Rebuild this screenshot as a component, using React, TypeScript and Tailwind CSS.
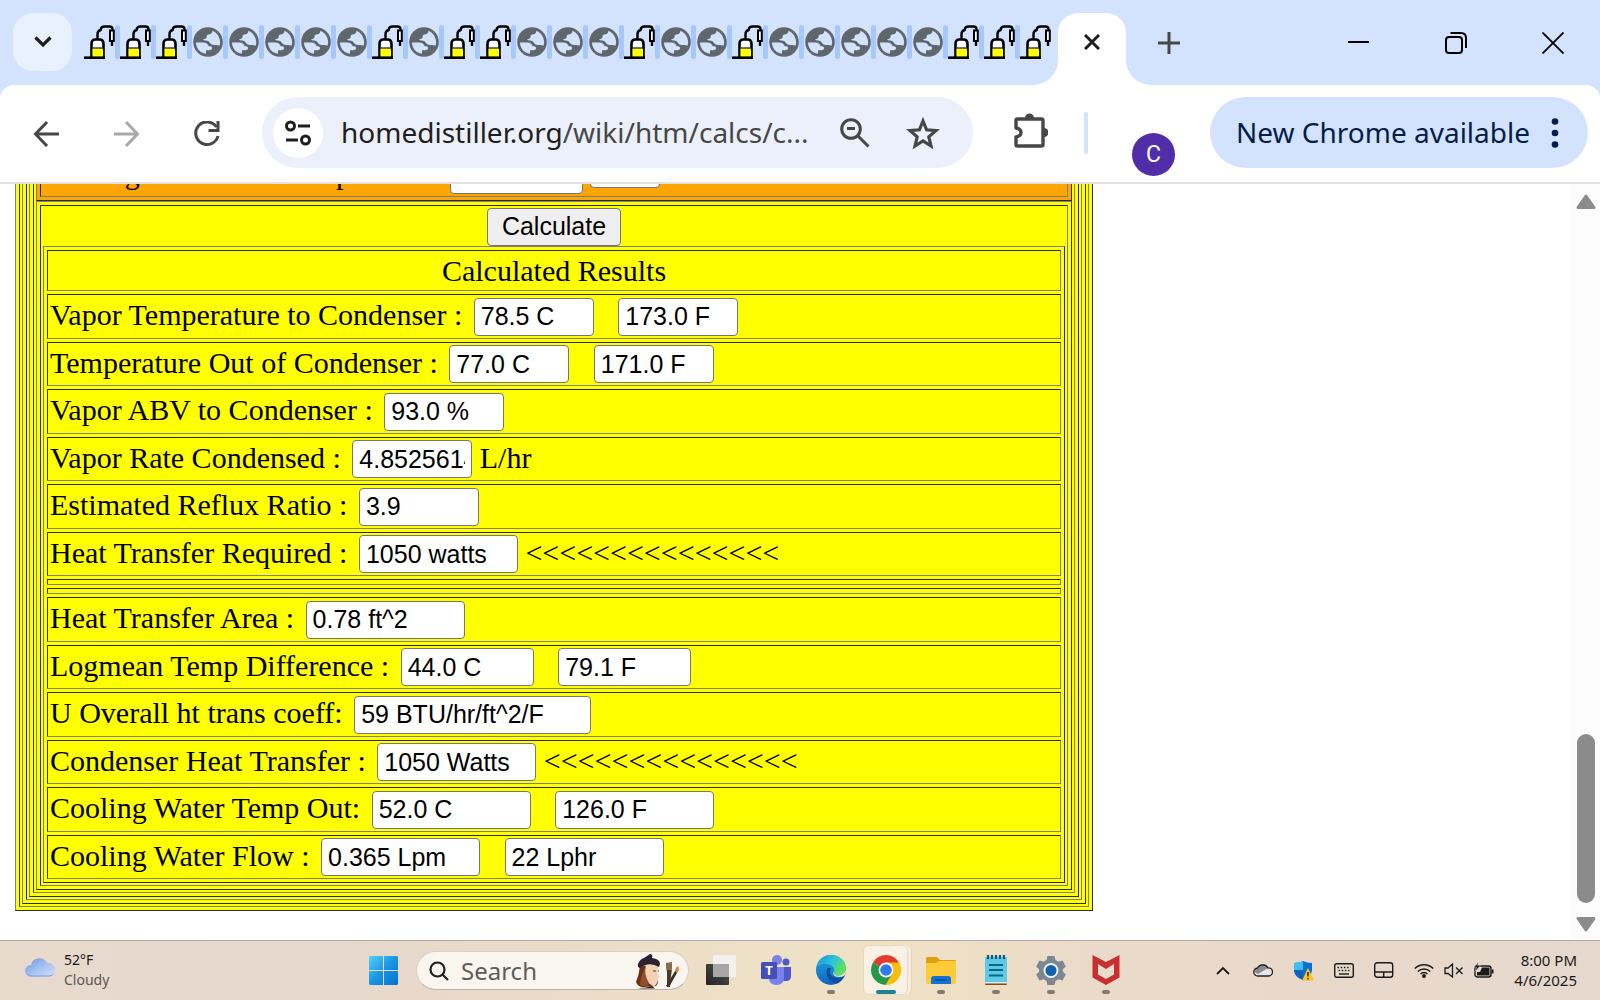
import React from "react";

const UI = "font-['Noto_Sans','Open_Sans',sans-serif]";

/* ---------- tab strip ---------- */

function StillIcon() {
  return (
    <svg className="h-[34px] w-[31px] shrink-0" viewBox="0 0 31 34" fill="none">
      <path d="M7.500 32V19q0-4.500 4-4.500h4q4 0 4 4.500v13z" fill="#fff" stroke="#000" strokeWidth="2.600" />
      <path d="M8.500 23.500h10.500V32H8.500z" fill="#ff0" />
      <path d="M8 23h11" stroke="#333" strokeWidth="1.400" />
      <path d="M0 32.700h21" stroke="#000" strokeWidth="2.600" />
      <path d="M13.500 14.500V9q0-3 3-4 .5-3.500 4-3.500h5q3 0 3 3v1" stroke="#000" strokeWidth="2.400" />
      <path d="M26 5.500h3.800v10.500H26z" fill="#fff" stroke="#000" strokeWidth="2" />
      <path d="M28 16v5" stroke="#000" strokeWidth="2.400" />
    </svg>
  );
}

function GlobeIcon() {
  return (
    <svg className="h-[30px] w-[31px] shrink-0" viewBox="-1 0 31 30">
      <circle cx="15" cy="15" r="14.800" fill="#5f666c" />
      <path
        d="M3 15.500h7.500q4 0 5 3.500 3.500 0 3.500 2 0 2.200-3 2.200h-3v3.500q-6.500-1-8.700-6Q3 18.500 3 15.500z"
        fill="#d3e3fd"
      />
      <path
        d="M19.500 3.800Q19 7 16.500 7.300q-3 .2-3 2.700 0 2-3.500 2.200.5 1.500 3.500 1.300 2.500 0 3.500 2.500 1.500 2.500 5 2 3-.3 4.500.8 1.500-3.300 0-7.300Q24.500 6 19.500 3.800z"
        fill="#d3e3fd"
      />
    </svg>
  );
}

const TABS = "SSSGGGGGSGSSGGGSGGSGGGGGSSS".split("");

function TabStrip() {
  return (
    <header className="flex h-[85px] shrink-0 items-start bg-[#d3e3fd]">
      <button aria-label="Search tabs" className="mt-[13px] ml-[13px] flex h-[58px] w-[59px] shrink-0 items-center justify-center rounded-[20px] bg-[#e9f1fe]">
        <svg className="h-3 w-[18px]" viewBox="0 0 18 12" fill="none" stroke="#1f1f1f" strokeWidth="3.200">
          <path d="M1.500 1.500L9 9l7.500-7.500" />
        </svg>
      </button>
      <div className="mt-[25px] ml-3 flex shrink-0" role="tablist">
        {TABS.map((t, i) => (
          <button key={i} role="tab" aria-label={"Tab " + (i + 1)} className="flex h-[34px] w-9 items-center">
            {t === "S" ? <StillIcon /> : <GlobeIcon />}
            {i < TABS.length - 1 && <span className="h-[34px] w-[5px] rounded-full bg-[#a8c7fa]" />}
          </button>
        ))}
      </div>
      <div className="-ml-[23px] flex shrink-0 self-end">
        <span className="h-[25px] w-[25px] self-end overflow-hidden bg-white">
          <span className="block h-full w-full rounded-br-[25px] bg-[#d3e3fd]" />
        </span>
        <div className="flex h-[72px] w-[68px] justify-center rounded-t-[20px] bg-white">
          <button aria-label="Close tab" className="mt-[21px] h-4 w-4">
            <svg viewBox="0 0 16 16" className="h-4 w-4" stroke="#1f1f1f" strokeWidth="3">
              <path d="M1 1l14 14M15 1L1 15" />
            </svg>
          </button>
        </div>
        <span className="h-[25px] w-[25px] self-end overflow-hidden bg-white">
          <span className="block h-full w-full rounded-bl-[25px] bg-[#d3e3fd]" />
        </span>
      </div>
      <button aria-label="New tab" className="mt-8 ml-[7px]">
        <svg viewBox="0 0 22 22" className="h-[22px] w-[22px]" stroke="#474747" strokeWidth="3">
          <path d="M11 0v22M0 11h22" />
        </svg>
      </button>
      <div className="mt-8 mr-9 ml-auto flex gap-[75px]">
        <button aria-label="Minimize">
          <svg viewBox="0 0 22 22" className="h-[22px] w-[22px]" stroke="#000" strokeWidth="2">
            <path d="M0 10h21" />
          </svg>
        </button>
        <button aria-label="Restore">
          <svg viewBox="0 0 22 22" className="h-[22px] w-[22px]" stroke="#000" strokeWidth="2" fill="none">
            <rect x="1" y="5" width="16" height="16" rx="3" />
            <path d="M5.500 1H16q5 0 5 5v10" />
          </svg>
        </button>
        <button aria-label="Close">
          <svg viewBox="0 0 22 22" className="h-[22px] w-[22px]" stroke="#000" strokeWidth="1.800">
            <path d="M.5.5l21 21M21.500.5l-21 21" />
          </svg>
        </button>
      </div>
    </header>
  );
}

/* ---------- address bar ---------- */

function Toolbar() {
  return (
    <div className="shrink-0 bg-[#d3e3fd]">
      <div className={"flex h-[99px] items-start rounded-t-[14px] border-b-2 border-[#e1e1e1] bg-white pt-3 " + UI}>
        <button aria-label="Back" className="mt-6 ml-[33px]">
          <svg viewBox="0 0 26 26" className="h-[26px] w-[26px]" fill="none" stroke="#474747" strokeWidth="3">
            <path d="M26 13H3M14 1L2.500 13 14 25" />
          </svg>
        </button>
        <button aria-label="Forward" className="mt-6 ml-[55px]">
          <svg viewBox="0 0 26 26" className="h-[26px] w-[26px]" fill="none" stroke="#a9a9a9" strokeWidth="3">
            <path d="M0 13h23M12 1l11.500 12L12 25" />
          </svg>
        </button>
        <button aria-label="Reload" className="mt-6 ml-[54px]">
          <svg viewBox="0 0 26 26" className="h-[26px] w-[26px]" fill="none" stroke="#474747" strokeWidth="3">
            <path d="M22.500 6A11.300 11.300 0 1 0 24 15" />
            <path d="M24 0v9.500h-9.500" />
          </svg>
        </button>
        <div className="ml-[42px] flex h-[71px] w-[711px] items-center rounded-full bg-[#ebf0fa]">
          <button aria-label="Site information" className="ml-[11px] flex h-[50px] w-[50px] shrink-0 items-center justify-center rounded-full bg-white">
            <svg viewBox="0 0 26 26" className="h-[26px] w-[26px]" fill="none" stroke="#1f1f1f" strokeWidth="3">
              <circle cx="5.500" cy="6" r="4" />
              <path d="M13 6h12M1 20h12" />
              <circle cx="20.500" cy="20" r="4" />
            </svg>
          </button>
          <a href="#address" className="ml-[18px] w-[475px] pb-[2px] text-[28px] leading-[40px] whitespace-nowrap text-[#474747]">
            <span className="text-[#1f1f1f]">homedistiller.org</span>/wiki/htm/calcs/c...
          </a>
          <button aria-label="Zoom" className="ml-6">
            <svg viewBox="0 0 30 30" className="h-[30px] w-[30px]" fill="none" stroke="#474747" strokeWidth="3">
              <circle cx="11" cy="11" r="9.300" />
              <path d="M18 18l10.500 10.500M7 10.500h8" />
            </svg>
          </button>
          <button aria-label="Bookmark this page" className="ml-9">
            <svg viewBox="0 0 34 32" className="h-8 w-[34px]" fill="none" stroke="#474747" strokeWidth="3.200">
              <path d="M17 4l3.600 8.800 9.400.8-7.200 6.200 2.200 9.200L17 24l-8 5 2.200-9.200L4 13.600l9.400-.8z" />
            </svg>
          </button>
        </div>
        <button aria-label="Extensions" className="mt-4 ml-[41px]">
          <svg viewBox="0 0 34 36" className="h-9 w-[34px]">
            <path
              d="M3.500 6h24q1.500 0 1.500 1.500v24q0 1.500-1.500 1.500h-24Q2 33 2 31.500V24q5-1 5-4.500T2 15V7.500Q2 6 3.500 6z"
              fill="none"
              stroke="#474747"
              strokeWidth="3.400"
              strokeLinejoin="round"
            />
            <path d="M11 5a4.500 4.500 0 0 1 9 0zM30 15a4.500 4.500 0 0 1 0 9z" fill="#474747" />
          </svg>
        </button>
        <span className="mt-[15px] ml-9 h-[42px] w-1 rounded-full bg-[#d3e3fd]" />
        <button aria-label="Profile" className="mt-9 ml-11 flex h-[43px] w-[43px] items-center justify-center rounded-full bg-[#512da8] pt-[2px] font-[Roboto,sans-serif] text-[23px] text-white">
          C
        </button>
        <button className="mr-3 ml-auto flex h-[71px] w-[378px] items-center justify-between rounded-full bg-[#d3e3fd] pr-[29px] pl-[26px] text-[28px] whitespace-nowrap text-[#041e49]">
          <span className="pb-[2px]">New Chrome available</span>
          <svg viewBox="0 0 8 30" className="h-[30px] w-2" fill="#041e49">
            <circle cx="4" cy="3.500" r="3.300" />
            <circle cx="4" cy="15" r="3.300" />
            <circle cx="4" cy="26.500" r="3.300" />
          </svg>
        </button>
      </div>
    </div>
  );
}

/* ---------- calculator page ---------- */

const OUTSET = "border border-t-[#808080] border-l-[#808080] border-r-[#2c2c2c] border-b-[#2c2c2c]";
const INSET = "border border-t-[#2c2c2c] border-l-[#2c2c2c] border-r-[#808080] border-b-[#808080]";

function Frame({ children }: { children: React.ReactNode }) {
  return (
    <div className={"p-[3px] " + OUTSET}>
      <div className={"p-[2px] " + INSET}>{children}</div>
    </div>
  );
}

type Field = { value: string; width: string };
type Row = { label: string; fields: Field[]; after?: string };

const S = "w-[120px]";
const M = "w-[133px]";
const L = "w-[159px]";
const XL = "w-[237px]";
const MARKS = "<<<<<<<<<<<<<<<";

const VAPOR: Row[] = [
  { label: "Vapor Temperature to Condenser :", fields: [{ value: "78.5 C", width: S }, { value: "173.0 F", width: S }] },
  { label: "Temperature Out of Condenser :", fields: [{ value: "77.0 C", width: S }, { value: "171.0 F", width: S }] },
  { label: "Vapor ABV to Condenser :", fields: [{ value: "93.0 %", width: S }] },
  { label: "Vapor Rate Condensed :", fields: [{ value: "4.8525614", width: S }], after: "L/hr" },
  { label: "Estimated Reflux Ratio :", fields: [{ value: "3.9", width: S }] },
  { label: "Heat Transfer Required :", fields: [{ value: "1050 watts", width: L }], after: MARKS },
];

const TRANSFER: Row[] = [
  { label: "Heat Transfer Area :", fields: [{ value: "0.78 ft^2", width: L }] },
  { label: "Logmean Temp Difference :", fields: [{ value: "44.0 C", width: M }, { value: "79.1 F", width: M }] },
  { label: "U Overall ht trans coeff:", fields: [{ value: "59 BTU/hr/ft^2/F", width: XL }] },
  { label: "Condenser Heat Transfer :", fields: [{ value: "1050 Watts", width: L }], after: MARKS },
  { label: "Cooling Water Temp Out:", fields: [{ value: "52.0 C", width: L }, { value: "126.0 F", width: L }] },
  { label: "Cooling Water Flow :", fields: [{ value: "0.365 Lpm", width: L }, { value: "22 Lphr", width: L }] },
];

const INPUT =
  "h-[38px] rounded-[4px] border border-[#767676] bg-white px-[6px] font-['Liberation_Sans',sans-serif] text-[25px] ";

function ResultRow({ row, id }: { row: Row; id: string }) {
  return (
    <tr className="[&>td]:h-[44px] even:[&>td]:h-[45px]">
      <td className={"px-[2px] py-0 align-middle leading-[34px] whitespace-pre " + INSET}>
        <label htmlFor={id} className="pr-1">{row.label}</label>{" "}
        {row.fields.map((f, i) => (
          <React.Fragment key={i}>
            {i > 0 && <span className="pr-[2px]">{"\u00a0\u00a0 "}</span>}
            <input id={i === 0 ? id : undefined} aria-label={row.label} defaultValue={f.value} className={INPUT + f.width} />
          </React.Fragment>
        ))}
        {row.after && " " + row.after}
      </td>
    </tr>
  );
}

function Spacer() {
  return (
    <tr>
      <td className={"h-[6px] p-0 " + INSET} />
    </tr>
  );
}

function Calculator() {
  return (
    <div className="w-[70%] bg-[#ff0] font-['Liberation_Serif',serif] text-[30px] text-black">
      <Frame>
        <Frame>
          <Frame>
            <div className="bg-[#ffa500]">
              <Frame>
                <div className="leading-[34px] whitespace-pre">
                  <label htmlFor="inlet" className="pr-2">Cooling water Inlet Temperature</label>{" "}
                  <input id="inlet" className={INPUT + M} />{" "}
                  <select aria-label="Temperature unit" className="h-[29px] w-[70px] appearance-none rounded-[4px] border border-[#767676] bg-white align-baseline text-[20px]">
                    <option> </option>
                  </select>
                </div>
              </Frame>
            </div>
            <Frame>
              <button className="mx-auto flex h-[38px] w-[134px] items-center justify-center rounded-[4px] border border-[#767676] bg-[#efefef] font-['Liberation_Sans',sans-serif] text-[25px]">
                Calculate
              </button>
              <table className={"w-full border-separate border-spacing-[3px] " + OUTSET}>
                <tbody>
                  <tr>
                    <th className={"h-[41px] p-0 text-center leading-[36px] font-normal " + INSET}>Calculated Results</th>
                  </tr>
                  {VAPOR.map((r, i) => (
                    <ResultRow key={r.label} row={r} id={"vapor-" + i} />
                  ))}
                  <Spacer />
                  <Spacer />
                  {TRANSFER.map((r, i) => (
                    <ResultRow key={r.label} row={r} id={"transfer-" + i} />
                  ))}
                </tbody>
              </table>
            </Frame>
          </Frame>
        </Frame>
      </Frame>
    </div>
  );
}

function Page() {
  return (
    <main className="flex min-h-0 flex-1 bg-white">
      <div className="flex min-w-0 flex-1 flex-col justify-end overflow-hidden px-[15px] pb-[29px]">
        <Calculator />
      </div>
      <div className="flex w-[30px] shrink-0 flex-col items-center bg-[#fcfcfc] pt-[10px] pb-2 pl-[2px]">
        <svg viewBox="0 0 20 15" className="h-[15px] w-5" fill="#8b8b8b" stroke="#8b8b8b" strokeWidth="3" strokeLinejoin="round">
          <path d="M10 2l8 11.500H2z" />
        </svg>
        <div className="min-h-0 w-[18px] flex-1 pt-[525px]">
          <div className="h-[169px] rounded-full bg-[#8b8b8b]" />
        </div>
        <svg viewBox="0 0 20 15" className="h-[15px] w-5" fill="#8b8b8b" stroke="#8b8b8b" strokeWidth="3" strokeLinejoin="round">
          <path d="M10 13L2 1.500h16z" />
        </svg>
      </div>
    </main>
  );
}

/* ---------- taskbar ---------- */

function TaskApp({ label, running, children }: { label: string; running?: boolean; children: React.ReactNode }) {
  return (
    <button aria-label={label} className="flex h-[50px] w-[55px] flex-col items-center pt-2">
      <svg viewBox="0 0 32 32" className="h-8 w-8">
        {children}
      </svg>
      {running && <span className="mt-1 h-1 w-2 rounded-full bg-[#857b70]" />}
    </button>
  );
}

function Painter() {
  return (
    <svg viewBox="0 0 50 36" className="h-9 w-[50px]">
      <path d="M5 13Q4 22 1 29q2 6 9 5l11-1q3-3 1-6V12z" fill="#6b3219" />
      <path d="M11 12q7-3 12 0v9l1.500 4-2 1q0 6-4 7.500L12 29q-4-9-1-17z" fill="#f3d3b5" />
      <path d="M11 13q-2.500 8 3 17l-2 4-7-2q1-11 6-19z" fill="#95502b" />
      <path d="M3 11Q5 6 9 5l6-4q3 0 2 4 8 1 8 6l-1 3Q14 8 5 15q-3-1-2-4z" fill="#2e2230" />
      <path d="M2 35.500h18l-3-2.500-6 1.500z" fill="#3a2418" />
      <path d="M18 18h3M23 18h1" stroke="#5a3423" />
      <path d="M31 10l6-1v6l-1 8-3 1-2-9z" fill="#8b6b4d" />
      <path d="M32 17h4.500l-1.500 17h-3z" fill="#4a3b2c" />
      <path d="M43 13q2 4-1 7l-2-1q0-4 3-6z" fill="#dd7b3f" />
      <path d="M40 18l2 2-8 14-3-1z" fill="#3c342c" />
    </svg>
  );
}

function Taskbar() {
  return (
    <footer
      className={
        "flex h-[60px] shrink-0 border-t border-[#b5a9a0] bg-[linear-gradient(90deg,#e8dacd_0%,#e7d8ce_20%,#e9dac9_32%,#efe1c7_48%,#f0e2c5_56%,#eadac9_68%,#e7d8ce_100%)] pt-[5px] text-[#1b1b1b] " +
        UI
      }
    >
      <button className="flex w-[344px] shrink-0 items-start pt-1 pl-[25px] text-left">
        <svg viewBox="0 0 30 20" className="mt-[7px] h-5 w-[30px]">
          <defs>
            <linearGradient id="cloud" x1="0" y1="0" x2="1" y2="1">
              <stop offset="0" stopColor="#7396dd" />
              <stop offset=".55" stopColor="#a9c4f3" />
              <stop offset="1" stopColor="#d3e3fb" />
            </linearGradient>
          </defs>
          <path d="M6 20a6 6 0 0 1 0-12 8.500 8.500 0 0 1 16-2 7 7 0 0 1 2 14z" fill="url(#cloud)" />
          <path d="M2 17q2 2 5 2h17q3 0 4.500-2" stroke="#7b9de3" fill="none" />
        </svg>
        <span className="ml-[9px] text-[14px] leading-5">
          52°F
          <br />
          <span className="text-[#5c5854]">Cloudy</span>
        </span>
      </button>
      <div className="flex shrink-0">
        <button aria-label="Start" className="flex w-[79px] justify-center pt-[10px]">
          <svg viewBox="0 0 29 29" className="h-[29px] w-[29px]">
            <defs>
              <linearGradient id="win" x1="0" y1="0" x2="1" y2="1">
                <stop offset="0" stopColor="#4fd2fd" />
                <stop offset=".5" stopColor="#1a95e2" />
                <stop offset="1" stopColor="#0670cd" />
              </linearGradient>
            </defs>
            <path d="M1 0h13v14H0V1zM15 0h13l1 1v13H15zM0 15h14v14H1l-1-1zM15 15h14v13l-1 1H15z" fill="url(#win)" />
          </svg>
        </button>
        <label className="mt-[5px] -ml-[7px] flex h-[39px] w-[273px] items-center rounded-full border border-[#dccfc2] border-b-[#bfb2a8] bg-[#f9f5ef] pl-3">
          <svg viewBox="0 0 20 20" className="h-5 w-5 shrink-0" fill="none" stroke="#222" strokeWidth="2.200">
            <circle cx="8.500" cy="8.500" r="7" />
            <path d="M13.500 13.500L19 19" />
          </svg>
          <input aria-label="Search" placeholder="Search" className="ml-3 h-8 w-[174px] bg-transparent text-[24px] leading-8 placeholder:text-[#5f5c58]" />
          <Painter />
        </label>
        <div className="ml-[4px] flex">
          <TaskApp label="Task view">
            <defs>
              <linearGradient id="tv" x1="0" y1="1" x2="1" y2="0">
                <stop offset="0" stopColor="#222" />
                <stop offset="1" stopColor="#555" />
              </linearGradient>
            </defs>
            <rect x="1" y="10" width="23" height="21" rx="1" fill="url(#tv)" />
            <rect x="8" y="1" width="23" height="22" rx="1" fill="#f3f1ee" />
            <rect x="8" y="10" width="16" height="13" fill="#a7a7a7" />
          </TaskApp>
          <TaskApp label="Teams">
            <circle cx="17" cy="6" r="5" fill="#7b83eb" />
            <circle cx="26" cy="8" r="3.500" fill="#5059c9" />
            <path d="M21 13h10v9q0 5-5 5h-5z" fill="#5059c9" />
            <path d="M9 13h15v11q0 7-7.500 7T9 24z" fill="#7b83eb" />
            <rect x="1" y="8" width="16" height="17" rx="1.500" fill="#464eb8" />
            <text x="9" y="21" textAnchor="middle" fontSize="13" fontWeight="700" fill="#fff">T</text>
          </TaskApp>
          <TaskApp label="Edge" running>
            <defs>
              <linearGradient id="edgeTop" x1="0" y1="0" x2="1" y2=".5">
                <stop offset="0" stopColor="#1893d6" />
                <stop offset=".55" stopColor="#2dc2df" />
                <stop offset="1" stopColor="#62e254" />
              </linearGradient>
              <linearGradient id="edgeLow" x1="0" y1="0" x2="0" y2="1">
                <stop offset="0" stopColor="#1faadb" />
                <stop offset="1" stopColor="#0f62c0" />
              </linearGradient>
            </defs>
            <circle cx="16" cy="16" r="15" fill="url(#edgeLow)" />
            <path d="M1.500 13C3 5 9 1 16 1c9 0 15 6 15 13 0 5-4 7.500-8 7.500-3 0-5-1-4.500-2.500 1.500-2 1-6-3-8C10 8.500 4 10 1.500 13z" fill="url(#edgeTop)" />
            <path d="M12.500 14c-3 6 1 14.500 9 15.500 3-1 6-4 7.500-7-7 4-15 0-14-5.500 0-1.500 1-2.500 1-3z" fill="#0e4f9e" />
            <path d="M19 17c-2 3 0 6 5 6 3 0 5-1 6-2 1-2 1-4 1-5-2 4-5 5.500-8 5.500-3.500 0-5-1.500-4-4.500z" fill="#efe1c6" />
          </TaskApp>
          <div className="-mt-px w-[55px]">
            <div className="mr-[5px] ml-[5px] h-[50px] rounded-[6px] border border-[#e6d8c4] bg-[#f9f1e4] shadow-[3px_0_0_#f7eddd,4px_0_0_#e3d5c0]">
              <button aria-label="Chrome" className="flex w-full flex-col items-center pt-2">
                <svg viewBox="0 0 32 32" className="h-8 w-8">
                  <path d="M16 16L3 8.500A15 15 0 0 1 29 8.500z" fill="#e33b2e" />
                  <path d="M16 16l13-7.500A15 15 0 0 1 15.500 31L22.500 19.500z" fill="#fbbc0a" />
                  <path d="M16 16l13-7.500H16z" fill="#e33b2e" />
                  <path d="M16 16L3 8.500A15 15 0 0 0 15.500 31L22.500 19.500z" fill="#27984a" />
                  <path d="M16 8.500h13a15 15 0 0 1 1 11l-8 .5z" fill="#fbbc0a" />
                  <circle cx="16" cy="16" r="7.400" fill="#fff" />
                  <circle cx="16" cy="16" r="5.800" fill="#2f7bee" />
                </svg>
                <span className="mt-1 h-1 w-5 rounded-full bg-[#1f8299]" />
              </button>
            </div>
          </div>
          <TaskApp label="File Explorer" running>
            <path d="M1 5q0-2 2-2h9l3 3h15q1 0 1 2v6H1z" fill="#e0a009" />
            <path d="M1 9h10l3-2h17v20q0 3-2 3H3q-2 0-2-3z" fill="#fccb3a" />
            <path d="M6 30v-5q0-3 3-3h14q3 0 3 3v5z" fill="#1372cf" />
            <path d="M10 26h12" stroke="#0b4f9c" strokeWidth="1.500" />
          </TaskApp>
          <TaskApp label="Notepad" running>
            <path d="M5 28h22v2q0 1-1 1H6q-1 0-1-1z" fill="#8c4a13" />
            <rect x="5" y="3" width="22" height="26" rx="1.500" fill="#5ecae6" />
            <path d="M5 28h22v1.500H5z" fill="#d9ecf1" />
            <path d="M9 11h14M9 16h14M9 21.500h14" stroke="#0a6887" strokeWidth="2" />
            <path d="M8 1v4M12 1v4M16 1v4M20 1v4M24 1v4" stroke="#0b5c78" strokeWidth="2.200" />
          </TaskApp>
          <TaskApp label="Settings" running>
            <path
              d="M12.500 2h7l1 4 3 1.700 4-1.200 3.300 6-2.900 2.800v2.400l2.900 2.800-3.300 6-4-1.200-3 1.700-1 4h-7l-1-4-3-1.700-4 1.200-3.300-6 2.900-2.800v-2.400L1.200 12.500l3.300-6 4 1.200 3-1.700z"
              fill="#7c8791"
            />
            <circle cx="16" cy="16.500" r="7.500" fill="#f2efe9" />
            <circle cx="16" cy="16.500" r="5.500" fill="#0f62ae" />
          </TaskApp>
          <TaskApp label="McAfee" running>
            <path d="M2.500 1l13.500 7L29.500 1v22.500L16 31 2.500 23.500z" fill="#c8302f" />
            <path d="M8 10l8 5 8-5v10.500L16 25l-8-4.500z" fill="#eadcca" />
          </TaskApp>
        </div>
      </div>
      <div className="mr-[23px] ml-auto flex items-start pt-3 text-[#1b1b1b]">
        <div className="flex h-6 items-center">
          <button aria-label="Show hidden icons">
            <svg viewBox="0 0 14 9" className="h-[9px] w-[14px]" fill="none" stroke="#1b1b1b" strokeWidth="1.800">
              <path d="M1 8l6-6 6 6" />
            </svg>
          </button>
          <button aria-label="OneDrive" className="ml-[23px]">
            <svg viewBox="0 0 20 14" className="h-[14px] w-5">
              <path d="M5 13a4 4 0 0 1-.5-8 6 6 0 0 1 10.500 0 4 4 0 0 1 1 8z" fill="#e6e6e6" />
              <path d="M1.500 9q0-4 3-4Q7 1 10 1q4 0 5 4L5 11z" fill="#8b8b8b" />
              <path d="M5 13a4 4 0 0 1-.5-8 6 6 0 0 1 10.500 0 4 4 0 0 1 1 8z" fill="none" stroke="#222" strokeWidth="1.300" />
            </svg>
          </button>
          <button aria-label="Windows Security" className="ml-[21px]">
            <svg viewBox="0 0 20 21" className="h-[21px] w-5">
              <path d="M9 1q4 2 9 2v7q0 7-9 10Q0 17 0 10V3q5 0 9-2z" fill="#0b6fd0" />
              <path d="M9 1q-4 2-9 2v7h9z" fill="#3dbdf2" />
              <path d="M9 10H0q1 7 9 10z" fill="#0e63bd" />
              <path d="M14 8l6 12.500H8z" fill="#fdc51b" />
              <path d="M14 12v4.500M14 18v1.500" stroke="#222" strokeWidth="1.500" />
            </svg>
          </button>
          <button aria-label="Touch keyboard" className="ml-[20px]">
            <svg viewBox="0 0 20 15" className="h-[15px] w-5" fill="none" stroke="#1b1b1b" strokeWidth="1.400">
              <rect x=".7" y=".7" width="18.600" height="13.600" rx="2" />
              <path d="M3.500 4.500h13M4.500 7.500h11" strokeDasharray="1.500 1.700" />
              <path d="M5 11h10" />
            </svg>
          </button>
          <button aria-label="Virtual touchpad" className="ml-[20px]">
            <svg viewBox="0 0 20 16" className="h-4 w-5" fill="none" stroke="#1b1b1b" strokeWidth="1.400">
              <rect x=".7" y=".7" width="18" height="14.600" rx="2.500" />
              <path d="M1 10h18M9.700 10v5" />
            </svg>
          </button>
          <button aria-label="Network, volume and battery" className="ml-5 flex items-center gap-[10px]">
            <svg viewBox="0 0 20 15" className="h-[15px] w-5" fill="none" stroke="#1b1b1b" strokeWidth="1.500">
              <path d="M.8 5.500a13 13 0 0 1 18.400 0M3.800 8.500a8.700 8.700 0 0 1 12.400 0M6.600 11a4.800 4.800 0 0 1 6.800 0" />
              <circle cx="10" cy="13" r="1.200" fill="#1b1b1b" />
            </svg>
            <svg viewBox="0 0 20 15" className="h-[15px] w-5" fill="none" stroke="#1b1b1b" strokeWidth="1.300">
              <path d="M1 5h3l4.500-4v13L4 10.500H1zM12 4.500l6.500 6.500M18.500 4.500L12 11" />
            </svg>
            <svg viewBox="0 0 20 16" className="h-4 w-5">
              <rect x="1" y="4" width="16" height="11" rx="2.500" fill="none" stroke="#1b1b1b" strokeWidth="1.400" />
              <path d="M8 5.500h7.500v8H3V10h3zM17.500 7.500h2v4h-2z" fill="#1b1b1b" />
              <path d="M4.500 0L0 5.500h2.500L1 9.500l5.500-6H3.500z" fill="#1b1b1b" stroke="#e7d8cd" strokeWidth=".4" />
            </svg>
          </button>
        </div>
        <button className="-mt-2 ml-5 text-right text-[15px] leading-5">
          8:00 PM
          <br />
          4/6/2025
        </button>
      </div>
    </footer>
  );
}

export default function App() {
  return (
    <div className="flex h-screen flex-col overflow-hidden bg-white">
      <TabStrip />
      <Toolbar />
      <Page />
      <Taskbar />
    </div>
  );
}
